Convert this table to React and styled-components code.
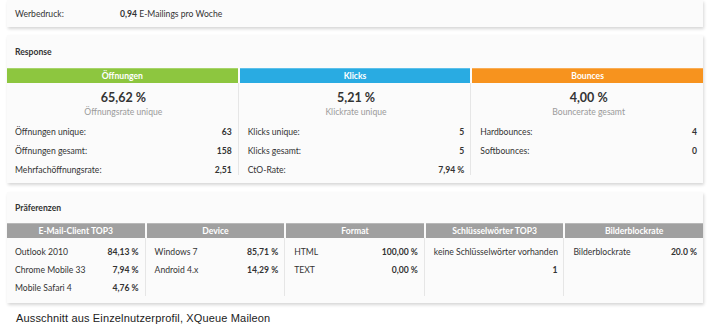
import React from "react";
import styled, { createGlobalStyle } from "styled-components";

const GlobalStyle = createGlobalStyle`
  *, *::before, *::after {
    box-sizing: border-box;
  }
  html, body {
    margin: 0;
    padding: 0;
    background: #ffffff;
  }
  body {
    font-family: Lato, "Open Sans", sans-serif;
    color: #333333;
  }
`;

const Page = styled.div`
  width: 710px;
  height: 330px;
  padding: 0 7px;
  overflow: hidden;
`;

const Card = styled.div`
  background: #fbfbfb;
  box-shadow: 1px 2px 3px rgba(0, 0, 0, 0.16);
  margin-bottom: ${(p) => p.gap || 0}px;
  padding-bottom: ${(p) => p.pb || 0}px;
`;

const TopRow = styled.div`
  height: 27px;
  display: flex;
  align-items: center;
  padding-left: 8px;
  font-size: 8.6px;
`;

const TopLabel = styled.span`
  width: 105px;
`;

const Strong = styled.b`
  font-weight: 700;
`;

const CardTitle = styled.div`
  height: ${(p) => p.h}px;
  display: flex;
  align-items: center;
  padding-left: 8px;
  font-size: 8.6px;
  font-weight: 700;
  color: #333;
`;

const Columns = styled.div`
  display: grid;
  grid-template-columns: repeat(${(p) => p.count}, 1fr);
  column-gap: 2px;
`;

const Column = styled.div`
  display: flex;
  flex-direction: column;
  min-width: 0;
`;

const ColHeader = styled.div`
  height: 15px;
  display: flex;
  align-items: center;
  justify-content: center;
  background: ${(p) => p.color};
  color: #ffffff;
  font-size: 8.6px;
  font-weight: 700;
  border-top: 1px solid ${(p) => p.edge};
  white-space: nowrap;
`;

const ColBody = styled.div`
  display: flex;
  flex-direction: column;
  height: ${(p) => p.h}px;
  padding: ${(p) => p.pt}px 6px 0 8px;
  margin-right: ${(p) => (p.last ? 0 : -1)}px;
  border-right: ${(p) => (p.last ? "none" : "1px solid #e6e6e6")};
`;

const BigValue = styled.div`
  text-align: center;
  font-size: 12.5px;
  font-weight: 700;
  line-height: 15px;
  color: #333;
`;

const SubLabel = styled.div`
  text-align: center;
  font-size: 8.6px;
  line-height: 13px;
  color: #9a9a9a;
  margin: 1px 0 3px;
`;

const Row = styled.div`
  display: flex;
  justify-content: space-between;
  align-items: center;
  flex-shrink: 0;
  height: ${(p) => p.h}px;
  font-size: 8.6px;
  color: #333;
  white-space: nowrap;
`;

const Value = styled.span`
  font-weight: 700;
`;

const Caption = styled.div`
  font-family: "Liberation Sans", Arial, sans-serif;
  font-size: 11px;
  line-height: 13px;
  color: #222;
  padding: 9px 0 0 9px;
  letter-spacing: 0.15px;
`;

const response = [
  {
    title: "Öffnungen",
    color: "#8dc63f",
    edge: "#a7d46a",
    big: "65,62 %",
    sub: "Öffnungsrate unique",
    rows: [
      ["Öffnungen unique:", "63"],
      ["Öffnungen gesamt:", "158"],
      ["Mehrfachöffnungsrate:", "2,51"],
    ],
  },
  {
    title: "Klicks",
    color: "#29abe2",
    edge: "#5cc0ea",
    big: "5,21 %",
    sub: "Klickrate unique",
    rows: [
      ["Klicks unique:", "5"],
      ["Klicks gesamt:", "5"],
      ["CtO-Rate:", "7,94 %"],
    ],
  },
  {
    title: "Bounces",
    color: "#f7931e",
    edge: "#f9ad55",
    big: "4,00 %",
    sub: "Bouncerate gesamt",
    rows: [
      ["Hardbounces:", "4"],
      ["Softbounces:", "0"],
    ],
  },
];

const prefs = [
  {
    title: "E-Mail-Client TOP3",
    rows: [
      ["Outlook 2010", "84,13 %"],
      ["Chrome Mobile 33", "7,94 %"],
      ["Mobile Safari 4", "4,76 %"],
    ],
  },
  {
    title: "Device",
    rows: [
      ["Windows 7", "85,71 %"],
      ["Android 4.x", "14,29 %"],
    ],
  },
  {
    title: "Format",
    rows: [
      ["HTML", "100,00 %"],
      ["TEXT", "0,00 %"],
    ],
  },
  {
    title: "Schlüsselwörter TOP3",
    rows: [
      ["keine Schlüsselwörter vorhanden", ""],
      ["", "1"],
    ],
  },
  {
    title: "Bilderblockrate",
    rows: [["Bilderblockrate", "20.0 %"]],
  },
];

export default function App() {
  return (
    <Page>
      <GlobalStyle />
      <Card gap={8}>
        <TopRow>
          <TopLabel>Werbedruck:</TopLabel>
          <span>
            <Strong>0,94</Strong> E-Mailings pro Woche
          </span>
        </TopRow>
      </Card>

      <Card gap={9} pb={8}>
        <CardTitle h={33}>Response</CardTitle>
        <Columns count={3}>
          {response.map((col, i) => (
            <Column key={col.title}>
              <ColHeader color={col.color} edge={col.edge}>
                {col.title}
              </ColHeader>
              <ColBody h={92} pt={7} last={i === response.length - 1}>
                <BigValue>{col.big}</BigValue>
                <SubLabel>{col.sub}</SubLabel>
                {col.rows.map(([label, value]) => (
                  <Row key={label} h={19}>
                    <span>{label}</span>
                    <Value>{value}</Value>
                  </Row>
                ))}
              </ColBody>
            </Column>
          ))}
        </Columns>
      </Card>

      <Card pb={7}>
        <CardTitle h={31}>Präferenzen</CardTitle>
        <Columns count={5}>
          {prefs.map((col, i) => (
            <Column key={col.title}>
              <ColHeader color="#a0a0a0" edge="#b8b8b8">
                {col.title}
              </ColHeader>
              <ColBody h={58} pt={5} last={i === prefs.length - 1}>
                {col.rows.map(([label, value], j) => (
                  <Row key={j} h={18}>
                    <span>{label}</span>
                    <Value>{value}</Value>
                  </Row>
                ))}
              </ColBody>
            </Column>
          ))}
        </Columns>
      </Card>

      <Caption>Ausschnitt aus Einzelnutzerprofil, XQueue Maileon</Caption>
    </Page>
  );
}
